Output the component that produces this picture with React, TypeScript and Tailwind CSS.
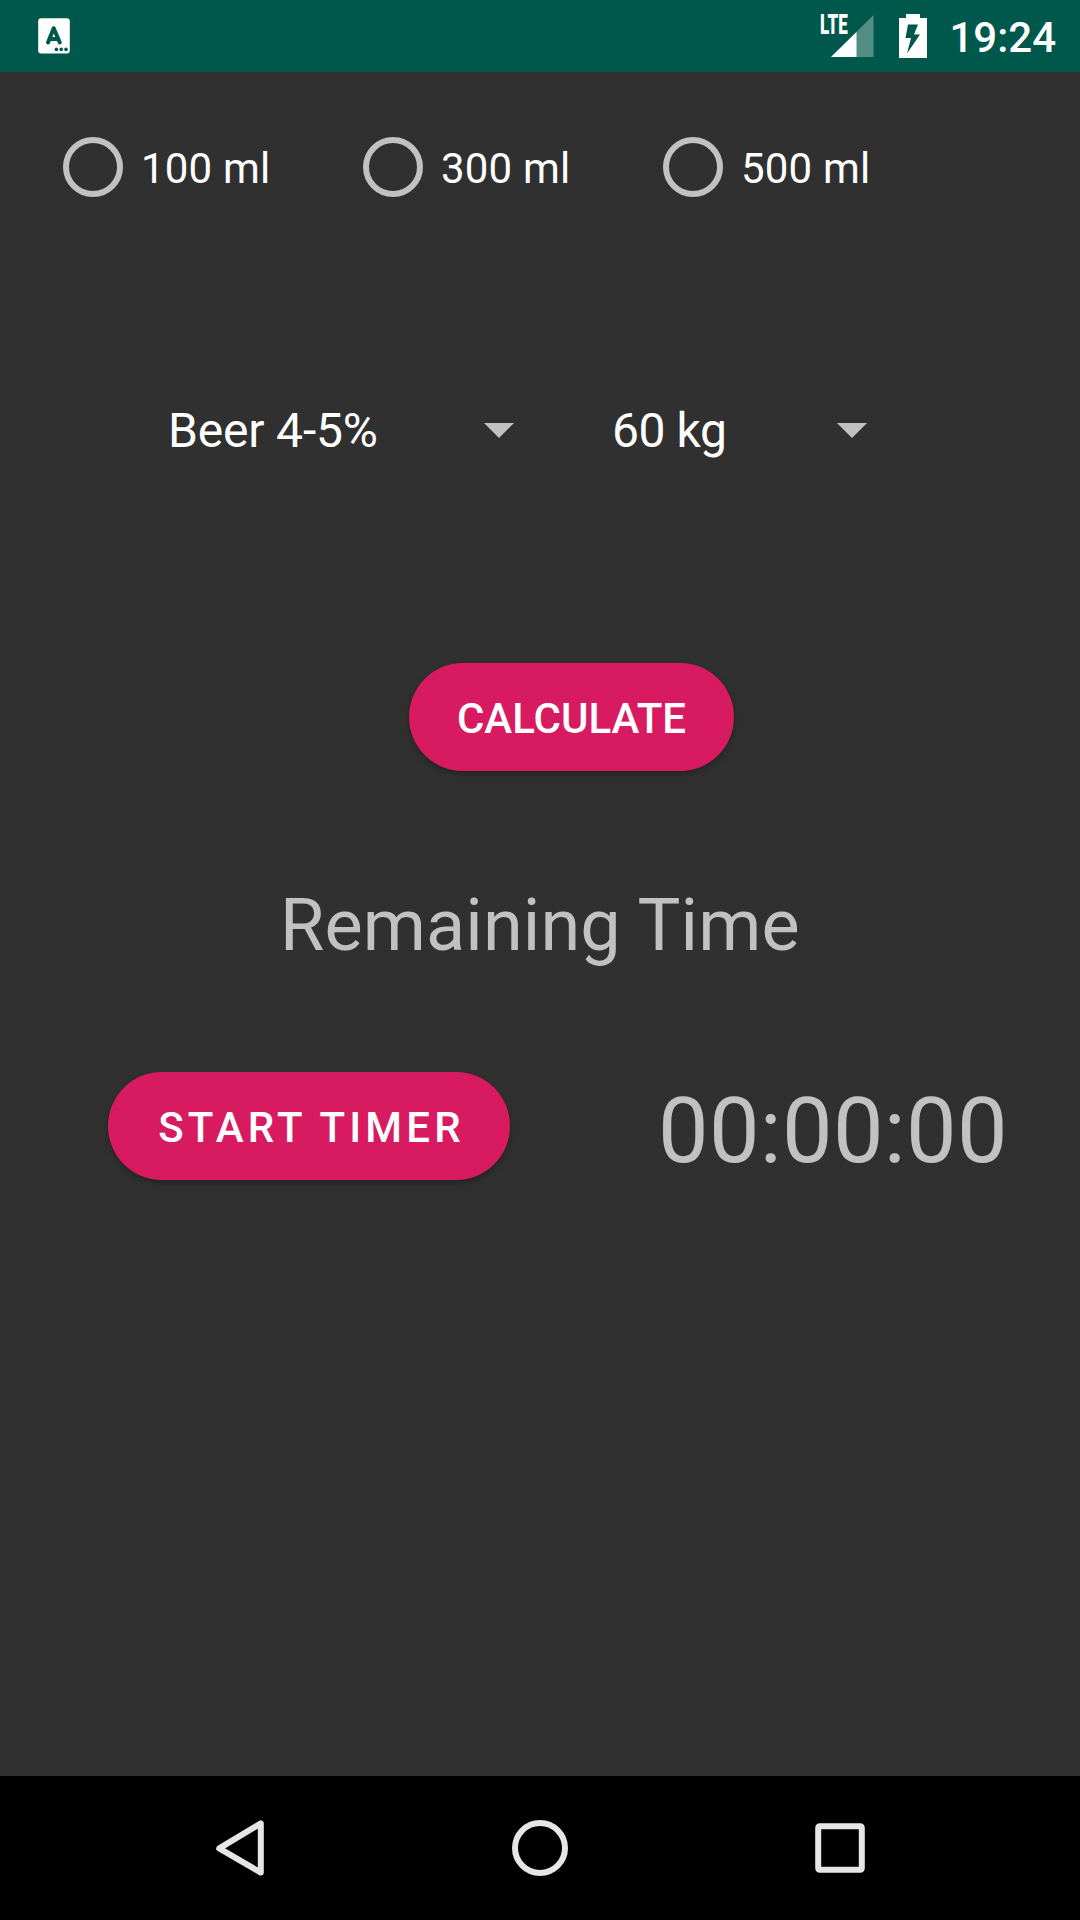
const volumes = ['100 ml', '300 ml', '500 ml'];

function StatusBar() {
  return (
    <header className="flex h-[72px] items-start justify-between bg-[#00574b] pl-[38px] pr-6">
      <svg className="mt-[18px]" width="32" height="36" viewBox="0 0 32 36">
        <rect x="0.2" y="0.3" width="31.6" height="35.2" rx="3" fill="#fff" />
        <path
          d="M10 24.5 15.7 10.2 21.8 24.5M12 21H20"
          fill="none"
          stroke="#00574b"
          strokeWidth="4"
          strokeLinecap="round"
          strokeLinejoin="round"
        />
        <circle cx="18.4" cy="31.4" r="1.8" fill="#00574b" />
        <circle cx="23.2" cy="31.4" r="1.8" fill="#00574b" />
        <circle cx="28" cy="31.4" r="1.8" fill="#00574b" />
      </svg>
      <div className="flex items-start">
        <div className="relative mt-[14px] h-[44px] w-[53px]">
          <span className="absolute left-0 top-[1px] origin-top-left scale-x-[0.63] text-[27px] font-black leading-[20px] text-white">
            LTE
          </span>
          <svg className="absolute left-[11px] top-[1px]" width="43" height="43" viewBox="0 0 43 43">
            <path d="M0 42 42.5 0V42Z" fill="#fff" fillOpacity="0.32" />
            <path d="M0 42 25.5 17V42Z" fill="#fff" />
          </svg>
        </div>
        <svg className="ml-[26px] mt-[14px]" width="28" height="44" viewBox="0 0 28 44">
          <path
            fillRule="evenodd"
            fill="#fff"
            d="M7 0H21V4H28V44H0V4H7ZM9 10.5 6.5 24H12L8 39.5 21 20.5H15L19 10.5Z"
          />
        </svg>
        <span className="ml-[22px] mt-[14px] text-[42px] font-medium leading-[48px] text-white">19:24</span>
      </div>
    </header>
  );
}

function Dropdown({ label, className }: { label: string; className: string }) {
  return (
    <button className={`flex h-[72px] items-center justify-between text-[48px] leading-[56px] text-white ${className}`}>
      <span>{label}</span>
      <svg className="-mt-px" width="30" height="15" viewBox="0 0 30 15">
        <path d="M0 0H30L15 15Z" fill="#c1c1c1" />
      </svg>
    </button>
  );
}

function NavBar() {
  return (
    <nav className="flex h-[144px] items-center bg-black pl-[210px]">
      <svg width="60" height="60" viewBox="0 0 60 60" fill="none" stroke="#e6e6e6" strokeWidth="6" strokeLinejoin="round">
        <path d="M50.8 5.4V54.6L9.2 30.4Z" />
      </svg>
      <svg className="ml-[240px]" width="60" height="60" viewBox="0 0 60 60" fill="none" stroke="#e6e6e6" strokeWidth="6">
        <circle cx="30" cy="30" r="25" />
      </svg>
      <svg className="ml-[240px]" width="60" height="60" viewBox="0 0 60 60" fill="none" stroke="#e6e6e6" strokeWidth="6">
        <rect x="8.2" y="8.2" width="43.6" height="43.6" rx="1.5" />
      </svg>
    </nav>
  );
}

export default function App() {
  return (
    <div className="flex h-[1920px] w-[1080px] flex-col overflow-hidden bg-[#303030] font-['Roboto',sans-serif]">
      <StatusBar />
      <main className="flex flex-1 flex-col">
        <div className="mt-[47px] flex pl-[45px]">
          {volumes.map((volume) => (
            <label key={volume} className="flex h-24 w-[300px] items-center pl-[18px] text-white">
              <span className="size-[60px] rounded-full border-[6px] border-[#c1c1c1]" />
              <span className="ml-[18px] mt-[3px] text-[42px] leading-[50px] tracking-[0.2px]">{volume}</span>
            </label>
          ))}
        </div>
        <div className="mt-[180px] flex pl-[168px]">
          <Dropdown label="Beer 4-5%" className="w-[346px] tracking-[-0.18px]" />
          <div className="w-[98px]" />
          <Dropdown label="60 kg" className="w-[255px] tracking-[-0.45px]" />
        </div>
        <button className="ml-[409px] mt-[196px] flex h-[108px] w-[325px] items-center justify-center rounded-full bg-[#d81b60] pt-[2px] text-[42px] font-medium text-white shadow-[0_3px_6px_rgba(0,0,0,0.28)]">
          CALCULATE
        </button>
        <h1 className="mt-[115px] pl-[280px] text-[72px] leading-[80px] tracking-[0.12px] text-[#c1c1c1]">
          Remaining Time
        </h1>
        <div className="mt-[106px] flex items-start pl-[108px]">
          <button className="flex h-[108px] w-[402px] items-center justify-center rounded-full bg-[#d81b60] pl-[5px] pt-[2px] text-[42px] font-medium tracking-[4.2px] text-white shadow-[0_3px_6px_rgba(0,0,0,0.28)]">
            START TIMER
          </button>
          <span className="ml-[148px] mt-[10px] text-[90px] leading-[100px] tracking-[0.35px] text-[#c1c1c1]">
            00:00:00
          </span>
        </div>
      </main>
      <NavBar />
    </div>
  );
}
